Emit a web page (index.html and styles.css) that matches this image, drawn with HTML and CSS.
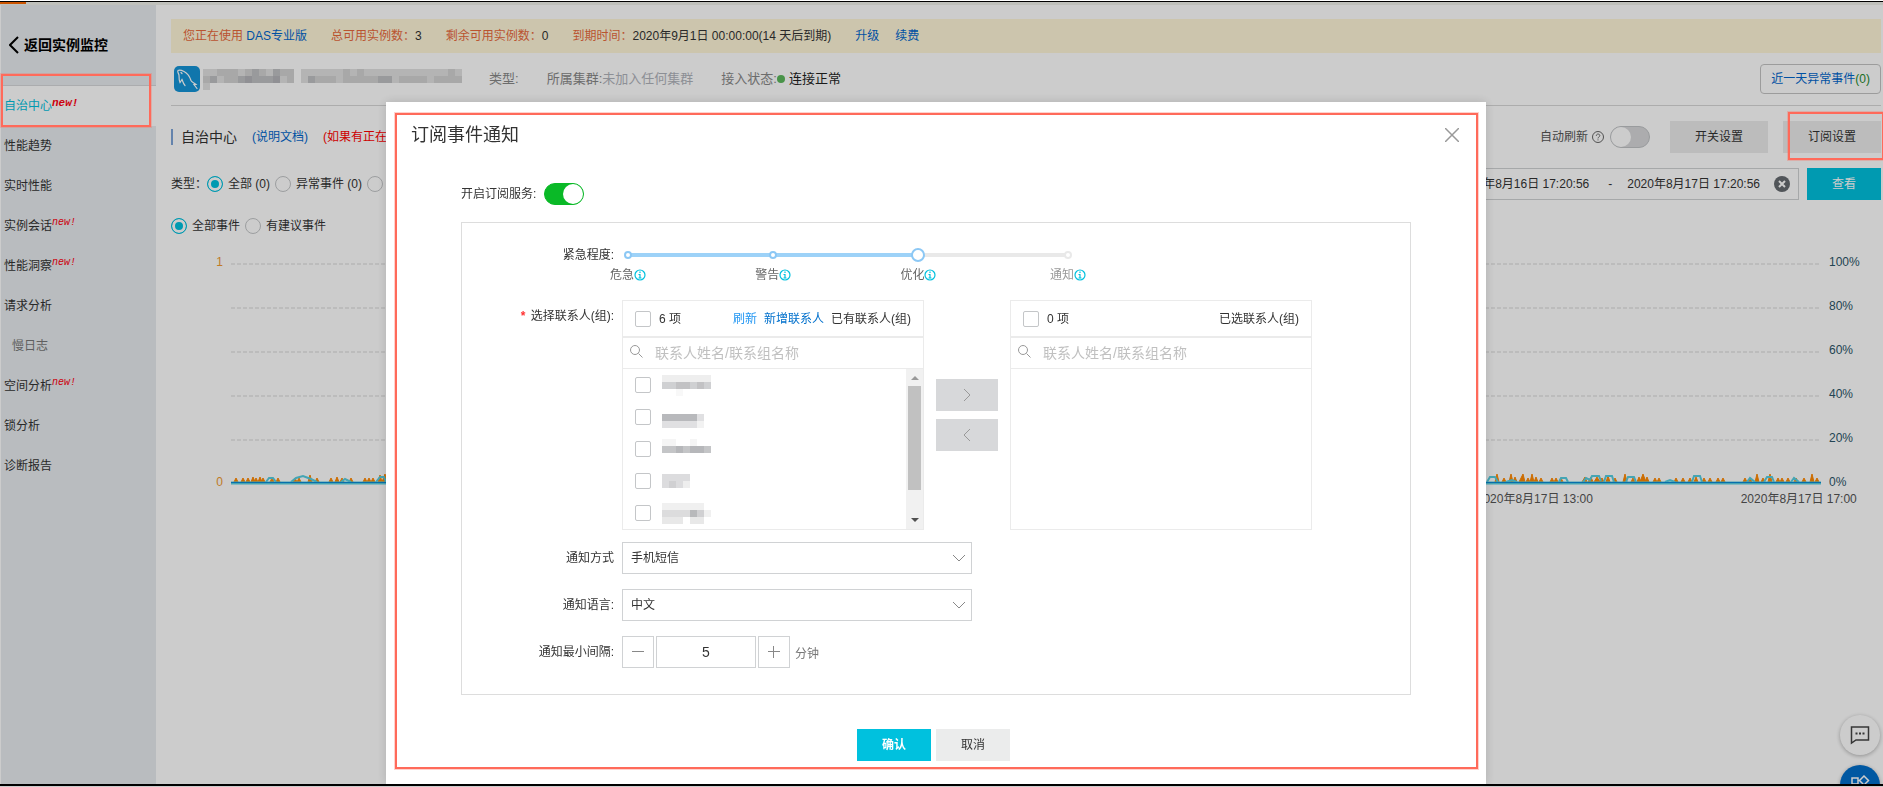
FILE: index.html
```html
<!DOCTYPE html>
<html lang="zh-CN">
<head>
<meta charset="UTF-8">
<meta name="viewport" content="width=device-width, initial-scale=1.0">
<title>自治中心</title>
<link rel="stylesheet" href="styles.css">
</head>
<body>

<div class="topbar"><span class="progress"></span></div>

<div class="layout">
  <nav class="sidebar">
    <a class="back" href="#">
      <svg width="10" height="18" viewBox="0 0 10 18" fill="none" stroke="#000" stroke-width="2"><path d="M9 1 1 9l8 8"/></svg>
      返回实例监控
    </a>
    <a class="item active" href="#">自治中心<sup>new!</sup></a>
    <a class="item" href="#">性能趋势</a>
    <a class="item" href="#">实时性能</a>
    <a class="item" href="#">实例会话<sup>new!</sup></a>
    <a class="item" href="#">性能洞察<sup>new!</sup></a>
    <a class="item" href="#">请求分析</a>
    <a class="item sub" href="#">慢日志</a>
    <a class="item" href="#">空间分析<sup>new!</sup></a>
    <a class="item" href="#">锁分析</a>
    <a class="item" href="#">诊断报告</a>
    <span class="mark mark-nav"></span>
  </nav>

  <main class="main">
    <div class="notice">
      <span><em>您正在使用</em> <a href="#">DAS专业版</a></span>
      <span><em>总可用实例数：</em>3</span>
      <span><em>剩余可用实例数：</em>0</span>
      <span><em>到期时间：</em>2020年9月1日 00:00:00(14 天后到期)</span>
      <span class="notice-links"><a href="#">升级</a><a href="#">续费</a></span>
    </div>

    <div class="instance">
      <svg class="logo" width="26" height="26" viewBox="0 0 26 26">
        <rect width="26" height="26" rx="5" fill="#1594d8"/>
        <path d="M4 4.500c2-1 4 0 6 1 4 2 6 6 7 9 1 2 3 2 5 4l-2 0 3 4M4 4.500c-1 2 1 3 1 5 0 3 0 5 1 7l2-3c1 2 1 4 3 6M7 6.500l1 1" fill="none" stroke="#fff" stroke-width="1.200" stroke-linecap="round"/>
      </svg>
      <svg class="masked" width="259" height="21" viewBox="0 0 37 3" preserveAspectRatio="none" shape-rendering="crispEdges">
        <path fill="#e2e2e2" d="M0 0h13v2H0zM0 2h1v1H0zM14 0h23v2H14z"/>
        <path fill="#d2d2d2" d="M2 0h3v1H2zM6 0h1v1H6zM8 0h1v1H8zM11 0h2v1h-2zM0 1h1v1H0zM3 1h2v1H3zM12 1h1v1h-1zM16 1h3v1h-3zM20 0h1v1h-1zM22 0h1v1h-1zM20 1h5v1h-5zM28 1h4v1h-4zM33 1h4v1h-4zM35 0h1v1h-1z"/>
        <path fill="#c0c1c4" d="M1 1h1v1H1zM7 0h1v1H7zM10 0h1v1h-1zM5 1h1v1H5zM7 1h4v1H7zM15 1h1v1h-1zM25 1h2v1h-2z"/>
        <path fill="#b4b5ba" d="M6 1h1v1H6zM10 1h1v1h-1z"/>
      </svg>
      <span class="meta">类型:</span>
      <span class="meta">所属集群:<i>未加入任何集群</i></span>
      <span class="meta">接入状态:<b class="dot"></b><strong>连接正常</strong></span>
      <button class="event-btn" type="button">近一天异常事件<span>(0)</span></button>
    </div>

    <div class="title-row">
      <h1>自治中心</h1>
      <a href="#">(说明文档)</a>
      <span class="warn">(如果有正在</span>
      <div class="tools">
        <label class="refresh" for="autoRefresh">自动刷新
          <svg width="12" height="12" viewBox="0 0 12 12" fill="none" stroke="#666"><circle cx="6" cy="6" r="5.500"/><path d="M4.300 4.800c0-2.300 3.500-2.300 3.500-.2C7.800 6 6 5.900 6 7.400M6 8.400v1"/></svg>
        </label>
        <input class="switch" type="checkbox" id="autoRefresh">
        <button class="grey-btn" type="button">开关设置</button>
        <div class="subscribe">
          <button class="grey-btn" type="button">订阅设置</button>
          <span class="mark mark-btn"></span>
        </div>
      </div>
    </div>

    <div class="filter-row">
      <span>类型：</span>
      <label><input type="radio" name="type" checked>全部 (0)</label>
      <label><input type="radio" name="type">异常事件 (0)</label>
      <input type="radio" name="type" aria-label="其他事件">
      <div class="range">
        <span>2020年8月16日 17:20:56</span><span class="dash">-</span><span>2020年8月17日 17:20:56</span>
        <svg width="16" height="16" viewBox="0 0 16 16"><circle cx="8" cy="8" r="8" fill="#666b70"/><path d="m5 5 6 6M11 5l-6 6" stroke="#fff" stroke-width="2"/></svg>
      </div>
      <button class="view-btn" type="button">查看</button>
    </div>

    <div class="filter-row events">
      <label><input type="radio" name="advice" checked>全部事件</label>
      <label><input type="radio" name="advice">有建议事件</label>
    </div>

    <div class="chart">
      <div class="axis axis-left"><span>1</span><span>0</span></div>
      <div class="plot">
        <div class="grid"><hr><hr><hr><hr><hr></div>
        <svg class="series" viewBox="0 0 1590 14" preserveAspectRatio="none" fill="none">
          <path stroke="#f80" fill="#f80" d="M3 10l2-4 2 4zM10 10l2-4 2 4zM15 10l2-4 2 4zM20 10l2-5 2 5zM23 10l2-4 2 4zM27 10l2-5 2 5zM30 10l2-4 2 4zM39 10l2-4 2 4zM45 10l2-4 2 4zM62 10l2-4 2 4zM66 10l2-4 2 4zM77 10l2-7 2 7zM84 10l2-4 2 4zM98 10l2-4 2 4zM104 10l2-5 2 5zM109 10l2-4 2 4zM118 10l2-4 2 4zM132 10l2-4 2 4zM136 10l2-4 2 4zM140 10l2-4 2 4zM147 10l2-7 2 7zM151 10l3-8 2 8z"/>
          <path stroke="#f80" fill="#f80" d="M1264 10l2-8 2 8zM1271 10l2-4 2 4zM1278 10l2-8 2 8zM1282 10l2-5 2 5zM1288 10l4-8 2 8zM1295 10l2-4 2 4zM1299 10l2-8 2 8zM1303 10l2-5 2 5zM1308 10l2-4 2 4zM1319 10l2-4 2 4zM1323 10l2-4 2 4zM1328 10l2-4 2 4zM1351 10l3-5 2 5zM1357 10l3-5 2 5zM1363 10l3-5 3 5zM1368 10l3-4 2 4zM1375 10l2-6 2 6zM1382 10l2-4 2 4zM1392 10l2-8 2 8zM1400 10l2-4 2 4zM1406 10l2-5 2 5zM1409 10l3-8 3 8zM1414 10l2-5 2 5zM1422 10l2-4 2 4zM1426 10l2-4 2 4zM1443 10l2-4 2 4zM1450 10l2-4 2 4zM1457 10l2-4 2 4zM1463 10l2-5 2 5zM1471 10l2-4 2 4zM1477 10l2-4 2 4zM1485 10l2-4 2 4zM1490 10l2-4 2 4zM1512 10l2-4 2 4zM1517 10l2-4 2 4zM1524 10l2-8 2 8zM1530 10l2-4 2 4zM1537 10l2-8 2 8zM1545 10l2-4 2 4zM1549 10l2-4 2 4zM1555 10l2-4 2 4zM1563 10l2-4 2 4zM1571 10l2-4 2 4zM1579 10l2-8 2 8zM1584 10l2-4 2 4z"/>
          <path stroke="#56cfe1" stroke-width="3" d="M0 11h1590"/>
          <path stroke="#56cfe1" stroke-width="2" d="M35 10l3-4 4 0 3 4M60 10l5-4 7-2 8 3 6 3M110 10l4-3 6 3M145 10l4-5 4 0 2 5M1256 10l3-5 5 0 3 5M1275 10l6-2 5 2M1328 10l2-4 5 0 2 4M1352 10l3-4 4 2 2-4 7 0 2 5M1373 10l2-6 6 0 2 6M1395 10l2-5 6 0 2 5M1434 10l5-2 5 2M1461 10l2-6 6 0 2 6M1516 10l3-4 5 4M1533 10l3-5 5 0 2 5M1560 10l3-4 5 4"/>
          <path stroke="#0a8ad6" stroke-width="1" d="M0 10.500h1590"/>
        </svg>
        <div class="dates"><span class="date-a">2020年8月17日 13:00</span><span class="date-b">2020年8月17日 17:00</span></div>
      </div>
      <div class="axis axis-right"><span>100%</span><span>80%</span><span>60%</span><span>40%</span><span>20%</span><span>0%</span></div>
    </div>
  </main>
</div>

<div class="floats">
  <button class="float chat" type="button" aria-label="咨询">
    <svg width="20" height="20" viewBox="0 0 20 20" fill="none" stroke="#444" stroke-width="1.500"><path d="M1.500 2h17v13H6l-4.500 3z"/><path d="M5.500 8.500h9" stroke-width="2" stroke-dasharray="2 1.500"/></svg>
  </button>
  <button class="float apps" type="button" aria-label="应用">
    <svg width="20" height="20" viewBox="0 0 20 20" fill="none" stroke="#fff" stroke-width="1.500"><path d="M2 3h6v6H2zM14 1l4.500 4.500L14 10 9.500 5.500zM2 12h6v6H2zM11 12h6v6h-6z"/></svg>
  </button>
</div>

<div class="overlay">
  <form class="dialog" id="subscribeForm">
    <header class="dialog-head">
      <h2>订阅事件通知</h2>
      <button class="close" type="button" aria-label="关闭">
        <svg width="14" height="14" viewBox="0 0 14 14" stroke="#999" stroke-width="1.500"><path d="m0 0 14 14M14 0 0 14"/></svg>
      </button>
    </header>

    <div class="service">
      <label for="service">开启订阅服务:</label>
      <input class="switch on" type="checkbox" id="service" checked>
    </div>

    <div class="panel">
      <div class="row row-level">
        <label class="name" for="level">紧急程度:</label>
        <div class="slider">
          <input type="range" id="level" min="0" max="100" value="66">
          <span class="stop stop-1"></span>
          <span class="stop stop-2"></span>
          <span class="stop stop-4"></span>
          <span class="tick tick-1">危急<svg class="info" viewBox="0 0 12 12"><circle cx="6" cy="6" r="5"/><path d="M6 2.500v1.500M4.500 5.500H6V9M4.500 9h3"/></svg></span>
          <span class="tick tick-2">警告<svg class="info" viewBox="0 0 12 12"><circle cx="6" cy="6" r="5"/><path d="M6 2.500v1.500M4.500 5.500H6V9M4.500 9h3"/></svg></span>
          <span class="tick tick-3">优化<svg class="info" viewBox="0 0 12 12"><circle cx="6" cy="6" r="5"/><path d="M6 2.500v1.500M4.500 5.500H6V9M4.500 9h3"/></svg></span>
          <span class="tick tick-4">通知<svg class="info" viewBox="0 0 12 12"><circle cx="6" cy="6" r="5"/><path d="M6 2.500v1.500M4.500 5.500H6V9M4.500 9h3"/></svg></span>
        </div>
      </div>

      <div class="row row-contacts">
        <span class="name"><b class="required">*</b> 选择联系人(组):</span>
        <div class="transfer">
          <div class="box">
            <div class="box-head">
              <label><input type="checkbox">6 项</label>
              <div class="box-links"><a class="reload" href="#">刷新</a><a href="#">新增联系人</a><span>已有联系人(组)</span></div>
            </div>
            <div class="search">
              <svg width="13" height="13" viewBox="0 0 13 13" fill="none" stroke="#999"><circle cx="5" cy="5" r="4.500"/><path d="m8.500 8.500 4 4"/></svg>
              <input type="text" placeholder="联系人姓名/联系组名称" aria-label="搜索已有联系人">
            </div>
            <div class="box-body">
              <ul>
                <li><input type="checkbox" aria-label="联系人1">
                  <svg width="49" height="21" viewBox="0 0 7 3" shape-rendering="crispEdges"><path fill="#eee" d="M0 0h7v1H0z"/><path fill="#cfd0d2" d="M0 1h7v1H0z"/><path fill="#c2c2c4" d="M2 1h2v1H2zM5 1h1v1H5z"/><path fill="#f8f8f8" d="M2 2h1v1H2z"/></svg></li>
                <li><input type="checkbox" aria-label="联系人2">
                  <svg width="49" height="21" viewBox="0 0 7 3" shape-rendering="crispEdges"><path fill="#b8b9bc" d="M0 1h5v1H0z"/><path fill="#e0e0e2" d="M0 2h5v1H0zM5 1h1v1H5z"/><path fill="#f2f2f2" d="M5 2h1v1H5z"/></svg></li>
                <li><input type="checkbox" aria-label="联系人3">
                  <svg width="49" height="21" viewBox="0 0 7 3" shape-rendering="crispEdges"><path fill="#f5f5f5" d="M0 0h2v1H0zM4 0h1v1H4z"/><path fill="#c4c5c7" d="M0 1h7v1H0z"/><path fill="#b6b7ba" d="M2 1h1v1H2zM4 1h2v1H4z"/></svg></li>
                <li><input type="checkbox" aria-label="联系人4">
                  <svg width="49" height="14" viewBox="0 0 7 2" shape-rendering="crispEdges"><path fill="#dcdcde" d="M0 0h4v1H0zM0 1h3v1H0z"/><path fill="#d0d0d2" d="M1 1h1v1H1z"/><path fill="#eee" d="M3 1h1v1H3z"/></svg></li>
                <li><input type="checkbox" aria-label="联系人5">
                  <svg width="49" height="21" viewBox="0 0 7 3" shape-rendering="crispEdges"><path fill="#f0f0f0" d="M0 0h6v1H0zM6 1h1v1H6z"/><path fill="#dcdcdd" d="M0 1h4v1H0z"/><path fill="#b8b9bb" d="M4 1h1v1H4z"/><path fill="#d0d0d2" d="M5 1h1v1H5z"/><path fill="#e8e8e8" d="M0 2h3v1H0zM4 2h2v1H4z"/></svg></li>
              </ul>
              <div class="scrollbar"><i class="up"></i><i class="thumb"></i><i class="down"></i></div>
            </div>
          </div>

          <div class="moves">
            <button type="button" aria-label="添加"><svg width="8" height="14" viewBox="0 0 8 14" fill="none" stroke="#999"><path d="m1 1 6 6-6 6"/></svg></button>
            <button type="button" aria-label="移除"><svg width="8" height="14" viewBox="0 0 8 14" fill="none" stroke="#999"><path d="M7 1 1 7l6 6"/></svg></button>
          </div>

          <div class="box">
            <div class="box-head">
              <label><input type="checkbox">0 项</label>
              <div class="box-links"><span>已选联系人(组)</span></div>
            </div>
            <div class="search">
              <svg width="13" height="13" viewBox="0 0 13 13" fill="none" stroke="#999"><circle cx="5" cy="5" r="4.500"/><path d="m8.500 8.500 4 4"/></svg>
              <input type="text" placeholder="联系人姓名/联系组名称" aria-label="搜索已选联系人">
            </div>
            <div class="box-body"></div>
          </div>
        </div>
      </div>

      <div class="row">
        <label class="name" for="method">通知方式</label>
        <div class="select">
          <select id="method"><option>手机短信</option></select>
          <svg width="14" height="8" viewBox="0 0 14 8" fill="none" stroke="#888"><path d="m1 1 6 6 6-6"/></svg>
        </div>
      </div>

      <div class="row">
        <label class="name" for="language">通知语言:</label>
        <div class="select">
          <select id="language"><option>中文</option></select>
          <svg width="14" height="8" viewBox="0 0 14 8" fill="none" stroke="#888"><path d="m1 1 6 6 6-6"/></svg>
        </div>
      </div>

      <div class="row">
        <label class="name" for="interval">通知最小间隔:</label>
        <div class="stepper">
          <button type="button" aria-label="减少"><svg width="12" height="12" viewBox="0 0 12 12" stroke="#888"><path d="M0 5.500h12"/></svg></button>
          <input type="text" id="interval" value="5">
          <button type="button" aria-label="增加"><svg width="12" height="12" viewBox="0 0 12 12" stroke="#888"><path d="M0 5.500h12M5.500 0v12"/></svg></button>
          <span>分钟</span>
        </div>
      </div>
    </div>

    <footer class="dialog-foot">
      <button class="ok" type="submit">确认</button>
      <button class="cancel" type="button">取消</button>
    </footer>
    <span class="mark mark-dialog"></span>
  </form>
</div>
<div class="bottombar"></div>

</body>
</html>
```

FILE: styles.css
```css
* {
  box-sizing: border-box;
}
body {
  margin: 0;
  height: 100vh;
  overflow: hidden;
  display: flex;
  flex-direction: column;
  background: #fff;
  color: #333;
  font: 12px/16px "Liberation Sans", "Noto Sans CJK SC", sans-serif;
}
a {
  color: #06c;
  text-decoration: none;
}
em, i {
  font-style: normal;
}
button, input, select {
  margin: 0;
  font: inherit;
  color: inherit;
}
button {
  padding: 0;
  border: none;
  cursor: pointer;
}
svg {
  display: block;
  flex: none;
}

/* window frame */
.topbar {
  flex: none;
  height: 4px;
  margin-top: 1px;
  border-top: 1px solid #000;
  background: #eff0ea;
}
.progress {
  display: block;
  width: 26px;
  height: 2px;
  background: #ff6a00;
}
.bottombar {
  position: fixed;
  left: 0;
  right: 0;
  bottom: 0;
  z-index: 20;
  height: 3px;
  border-top: 2px solid #000;
  background: #ccc;
}
.layout {
  flex: 1;
  display: flex;
  padding-left: 1px;
}

/* sidebar */
.sidebar {
  width: 155px;
  flex: none;
  background: #e8ecef;
}
.sidebar a {
  display: flex;
  align-items: center;
}
.back {
  height: 81px;
  gap: 5px;
  padding-left: 8px;
  border-bottom: 1px solid #d6d8da;
  color: #000;
  font-size: 14px;
  font-weight: bold;
}
.item {
  height: 40px;
  padding-left: 3px;
  color: #333;
}
.item.sub {
  padding-left: 11px;
  color: #777;
}
.item.active {
  background: #fff;
  color: #00c1de;
}
.item sup {
  align-self: flex-start;
  margin-top: 9px;
  color: #f01;
  font: italic 10px/16px "Liberation Mono", monospace;
}
.item.active sup {
  font-size: 11px;
  font-weight: bold;
}

/* red callout frames */
.mark {
  position: absolute;
  z-index: 20;
  border: 2px solid #ff6a5a;
  box-shadow: 0 0 0 1px rgba(255, 106, 90, .3);
  pointer-events: none;
}
.mark-nav {
  left: 1px;
  top: 74px;
  width: 150px;
  height: 53px;
}
.mark-btn {
  left: 5px;
  right: -3px;
  top: -9px;
  bottom: -7px;
}
.mark-dialog {
  left: 9px;
  right: 8px;
  top: 11px;
  bottom: 15px;
}

/* main */
.main {
  flex: 1;
  min-width: 0;
  padding: 14px 2px 0 15px;
}
.notice {
  display: flex;
  gap: 24px;
  height: 34px;
  padding: 0 12px;
  align-items: center;
  background: #fff7d9;
  white-space: nowrap;
}
.notice em {
  color: #e9693c;
}
.notice-links {
  display: flex;
  gap: 16px;
}
.instance {
  display: flex;
  align-items: center;
  height: 53px;
  padding-left: 3px;
  border-bottom: 1px solid #d8d8d8;
}
.logo {
  margin-right: 3px;
}
.masked {
  margin-right: 27px;
}
.meta {
  display: flex;
  align-items: center;
  margin-right: 28px;
  color: #888;
  font-size: 13px;
}
.meta i {
  color: #b0b3bb;
}
.meta strong {
  color: #222;
  font-weight: normal;
}
.dot {
  width: 8px;
  height: 8px;
  margin-right: 4px;
  border-radius: 50%;
  background: #5cb85c;
}
.event-btn {
  height: 30px;
  margin-left: auto;
  padding: 0 10px;
  border: 1px solid #c4c4c4;
  border-radius: 4px;
  background: #fff;
  color: #06c;
}
.event-btn span {
  color: #1e8a2e;
}
.title-row {
  display: flex;
  align-items: center;
  height: 62px;
  white-space: nowrap;
}
h1 {
  margin: 0 15px 0 0;
  padding-left: 8px;
  border-left: 2px solid #7da4d8;
  font-size: 14px;
  font-weight: normal;
}
.warn {
  margin-left: 15px;
  color: #f00;
}
.tools {
  display: flex;
  align-items: center;
  margin-left: auto;
}
.refresh {
  display: flex;
  align-items: center;
  gap: 4px;
  margin-right: 6px;
  color: #555;
}
.switch {
  appearance: none;
  display: flex;
  width: 40px;
  height: 22px;
  border: 1px solid #c0c2c5;
  border-radius: 11px;
  background: #d7d8da;
}
.switch::before {
  content: "";
  width: 20px;
  height: 20px;
  border-radius: 50%;
  background: #fff;
}
.switch:checked {
  justify-content: flex-end;
  border-color: #0ab927;
  background: #0ab927;
}
.grey-btn {
  width: 98px;
  height: 32px;
  background: #ebecec;
}
.tools .grey-btn {
  margin-left: 20px;
}
.subscribe {
  position: relative;
  margin-left: 15px;
}
.subscribe .grey-btn {
  display: block;
  margin-left: 0;
}
.filter-row {
  display: flex;
  align-items: center;
  height: 32px;
  white-space: nowrap;
}
.filter-row label {
  display: flex;
  align-items: center;
  gap: 5px;
  margin-right: 5px;
}
.events {
  height: 52px;
}
input[type="radio"] {
  appearance: none;
  width: 16px;
  height: 16px;
  border: 1px solid #c4c6c8;
  border-radius: 50%;
}
input[type="radio"]:checked {
  border-color: #00c1de;
  background: #00c1de;
  box-shadow: inset 0 0 0 3px #fff;
}
.range {
  display: flex;
  align-items: center;
  height: 32px;
  margin-left: auto;
  padding: 0 8px 0 12px;
  border: 1px solid #d0d2d4;
}
.dash {
  width: 38px;
  padding-left: 4px;
  text-align: center;
}
.range svg {
  margin-left: 14px;
}
.view-btn {
  width: 74px;
  height: 32px;
  margin-left: 8px;
  background: #00c1de;
  color: #fff;
}

/* chart */
.chart {
  display: flex;
  padding-top: 2px;
}
.axis {
  display: flex;
  flex-direction: column;
  justify-content: space-between;
  height: 236px;
}
.axis-left {
  width: 52px;
  margin-right: 8px;
  text-align: right;
  color: #f09a30;
}
.axis-right {
  width: 52px;
  margin-left: 8px;
  color: #2c5568;
}
.plot {
  flex: 1;
  min-width: 0;
  padding-top: 9px;
}
.grid {
  height: 209px;
}
.grid hr {
  height: 2px;
  margin: 0 0 42px;
  border: none;
  background: repeating-linear-gradient(90deg, #ebebeb 0 4px, transparent 4px 6px);
}
.series {
  position: relative;
  width: 100%;
  height: 14px;
}
.dates {
  position: relative;
  height: 20px;
  color: #555;
  white-space: nowrap;
}
.dates span {
  position: absolute;
  top: 0;
  padding-top: 5px;
  transform: translateX(-50%);
}
.date-a {
  left: 82%;
}
.date-b {
  left: 98.6%;
}
.floats {
  position: fixed;
  right: 3px;
  top: 715px;
  display: flex;
  flex-direction: column;
  gap: 10px;
}
.float {
  display: flex;
  align-items: center;
  justify-content: center;
  width: 40px;
  height: 40px;
  border-radius: 50%;
  background: #fff;
  box-shadow: 0 1px 4px rgba(0, 0, 0, .3);
}
.apps {
  background: #006ecb;
}

/* dialog */
.overlay {
  position: fixed;
  top: 2px;
  left: 0;
  right: 0;
  bottom: 3px;
  z-index: 10;
  display: flex;
  justify-content: center;
  align-items: flex-end;
  padding-right: 11px;
  background: rgba(0, 0, 0, .2);
}
.dialog {
  position: relative;
  width: 1100px;
  padding: 23px 75px;
  background: #fff;
  box-shadow: 0 0 10px rgba(0, 0, 0, .15);
}
.dialog-head {
  display: flex;
  align-items: center;
  justify-content: space-between;
  height: 20px;
  margin: 0 -48px 0 -50px;
}
h2 {
  margin: 0;
  font-size: 18px;
  line-height: 20px;
  font-weight: normal;
}
.close {
  background: none;
}
.service {
  display: flex;
  align-items: center;
  gap: 8px;
  height: 22px;
  margin: 38px 0 17px;
}
.panel {
  display: flex;
  flex-direction: column;
  gap: 15px;
  padding: 16px 98px 26px 8px;
  border: 1px solid #ddd;
}
.row {
  display: flex;
}
.row-level {
  height: 46px;
}
.row-contacts {
  margin-bottom: -3px;
}
.name {
  width: 144px;
  margin-right: 8px;
  line-height: 32px;
  text-align: right;
}
.required {
  color: #f33;
  margin-right: 2px;
}

/* urgency slider: thumb is 14px, so the input is 7px wider on each side */
.slider {
  position: relative;
  width: 440px;
  margin-left: 6px;
}
.slider input {
  appearance: none;
  display: block;
  width: 454px;
  height: 14px;
  margin: 9px -7px 0;
  background: linear-gradient(90deg, #9dd2f8 66%, #e9e9e9 66%) center / 440px 4px no-repeat;
}
.slider input::-webkit-slider-thumb {
  appearance: none;
  width: 14px;
  height: 14px;
  border: 2px solid #8cc8f5;
  border-radius: 50%;
  background: #fff;
}
.stop {
  position: absolute;
  top: 12px;
  width: 8px;
  height: 8px;
  margin-left: -4px;
  border: 2px solid #8cc8f5;
  border-radius: 50%;
  background: #fff;
}
.tick {
  position: absolute;
  top: 28px;
  display: flex;
  align-items: center;
  color: #666;
  transform: translateX(-50%);
  white-space: nowrap;
}
.stop-1, .tick-1 {
  left: 0;
}
.stop-2, .tick-2 {
  left: 33%;
}
.tick-3 {
  left: 66%;
}
.stop-4, .tick-4 {
  left: 100%;
}
.stop-4 {
  border-color: #e9e9e9;
}
.tick-4 {
  color: #999;
}
.info {
  width: 12px;
  height: 12px;
  fill: none;
  stroke: #00c1de;
  stroke-width: 1.2;
}

/* contacts transfer */
.transfer {
  display: flex;
  align-items: flex-start;
  gap: 12px;
}
.box {
  width: 302px;
  border: 1px solid #ebebeb;
}
.box-head {
  display: flex;
  align-items: center;
  justify-content: space-between;
  height: 37px;
  padding: 0 12px;
  border-bottom: 2px solid #ebebeb;
}
.box-head label {
  display: flex;
  align-items: center;
  gap: 8px;
}
.box-links {
  display: flex;
  gap: 7px;
}
.box-links .reload {
  color: #2196f3;
}
.box-links a {
  color: #0070cc;
}
.box input[type="checkbox"] {
  appearance: none;
  width: 16px;
  height: 16px;
  border: 1px solid #c4c6c8;
  border-radius: 2px;
}
.search {
  display: flex;
  height: 31px;
  padding-left: 7px;
  border-bottom: 1px solid #ebebeb;
}
.search svg {
  margin-top: 7px;
}
.search input {
  flex: 1;
  min-width: 0;
  padding: 0 0 0 12px;
  border: none;
  font-size: 14px;
}
.search input::placeholder {
  color: #c0c0c0;
}
.box-body {
  display: flex;
  justify-content: space-between;
  height: 160px;
}
ul {
  margin: 0;
  padding: 0 0 0 12px;
  list-style: none;
}
li {
  display: flex;
  align-items: center;
  gap: 11px;
  height: 32px;
}
.scrollbar {
  display: flex;
  flex-direction: column;
  align-items: center;
  width: 17px;
  padding: 7px 0;
  background: #f1f1f1;
}
.up, .down {
  border: 4px solid transparent;
}
.up {
  border-top: none;
  border-bottom-color: #999;
}
.down {
  margin-top: auto;
  border-bottom: none;
  border-top-color: #505050;
}
.thumb {
  width: 13px;
  height: 104px;
  margin-top: 6px;
  background: #c1c1c1;
}
.moves {
  display: flex;
  flex-direction: column;
  gap: 8px;
  padding-top: 79px;
}
.moves button {
  display: flex;
  align-items: center;
  justify-content: center;
  width: 62px;
  height: 32px;
  background: #d7d8da;
}

.select {
  position: relative;
  width: 350px;
}
.select select {
  appearance: none;
  display: block;
  width: 100%;
  height: 32px;
  padding: 0 8px;
  border: 1px solid #d0d2d4;
  border-radius: 0;
  background: #fff;
}
.select svg {
  position: absolute;
  right: 6px;
  top: 12px;
  pointer-events: none;
}
.stepper {
  display: flex;
  align-items: center;
  gap: 2px;
}
.stepper button {
  display: flex;
  align-items: center;
  justify-content: center;
  width: 32px;
  height: 32px;
  border: 1px solid #d0d2d4;
  background: #fff;
}
.stepper input {
  width: 100px;
  height: 32px;
  padding: 0;
  border: 1px solid #d0d2d4;
  font-size: 14px;
  text-align: center;
}
.stepper span {
  padding: 4px 0 0 3px;
  color: #777;
}

.dialog-foot {
  display: flex;
  justify-content: center;
  gap: 5px;
  padding: 34px 5px 0 0;
}
.dialog-foot button {
  width: 74px;
  height: 32px;
}
.ok {
  background: #00c1de;
  color: #fff;
  font-weight: bold;
}
.cancel {
  background: #ebecec;
}
```
